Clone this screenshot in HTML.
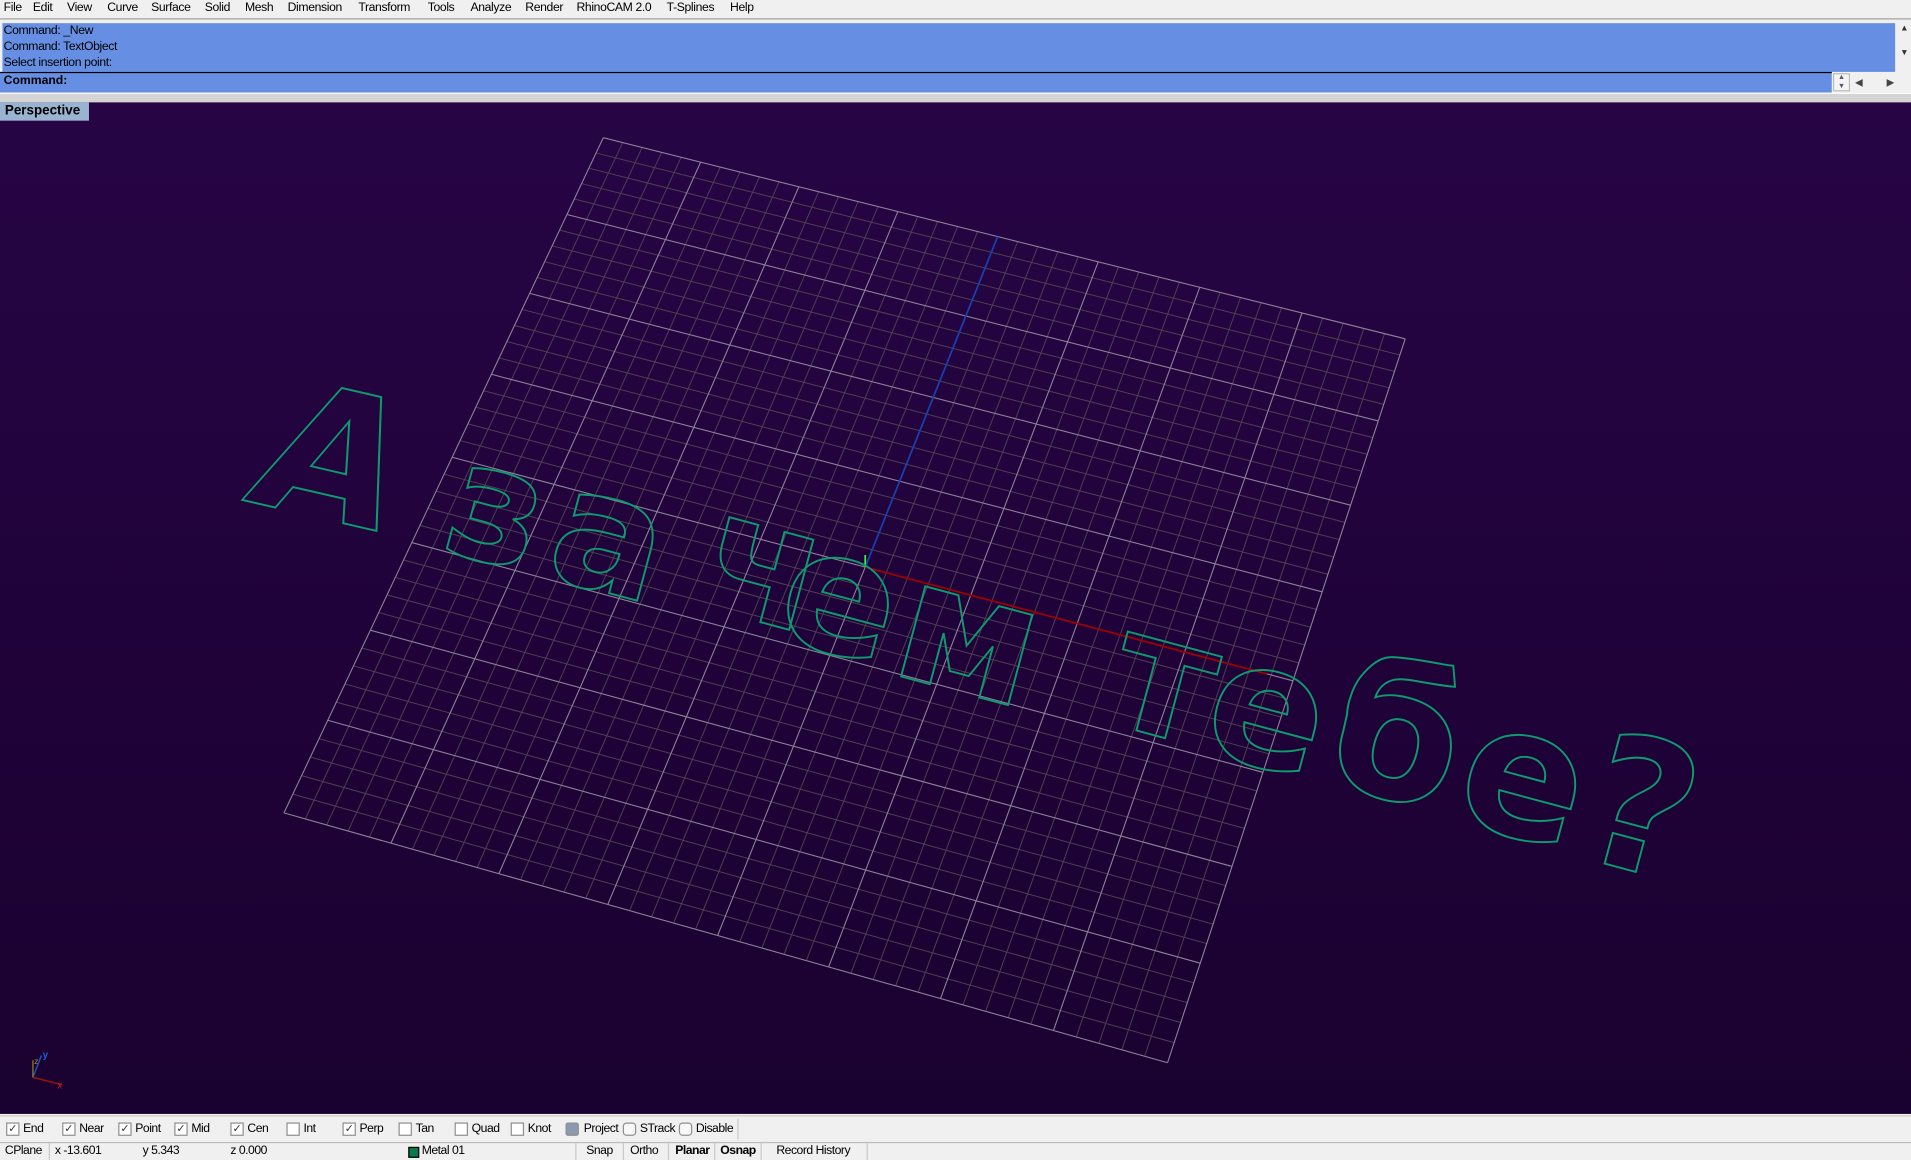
<!DOCTYPE html>
<html><head><meta charset="utf-8">
<style>
html,body{margin:0;padding:0;width:1911px;height:1159px;overflow:hidden;background:#f0f0f0}
#root{position:absolute;left:0;top:0;width:1568px;height:951px;transform:scale(1.21875);transform-origin:0 0;font-family:"Liberation Sans",sans-serif;font-size:10px;color:#000}
.a{position:absolute;white-space:nowrap}
#menu{position:absolute;left:0;top:0;width:1568px;height:15px;background:#f0f0f0;border-bottom:1px solid #a0a0a0}
#menu span{position:absolute;top:1px;letter-spacing:-0.3px}
#hist{position:absolute;left:2px;top:19px;width:1553px;height:40px;background:#668fe4}
#hist div{position:absolute;left:1px;letter-spacing:-0.3px}
#cmd{position:absolute;left:0;top:59px;width:1503px;height:16px;background:#668fe4;border-top:1px solid #000}
#grey{position:absolute;left:0;top:76px;width:1568px;height:8px;background:#d4d4d4;border-top:1px solid #fff;border-bottom:1px solid #999}
#vp{position:absolute;left:0;top:84px;width:1568px;height:830px;background:linear-gradient(#270545,#1f0238 60%,#1a0230)}
#persp{position:absolute;left:0;top:84px;width:73px;height:15px;background:#99b4d1;font-weight:bold;font-size:11px;line-height:15px;padding-left:4px;box-sizing:border-box}
#osnap{position:absolute;left:0;top:915px;width:1568px;height:21px;background:#f0f0f0;border-top:1px solid #ccc}
.cb{position:absolute;top:5px;width:9px;height:9px;border:1px solid #8f8f8f;background:#fff;font-size:9px;line-height:9px;text-align:center;color:#333}
.lb{position:absolute;top:5px;letter-spacing:-0.4px}
#status{position:absolute;left:0;top:937px;width:1568px;height:14px;background:#f0f0f0;border-top:1px solid #bbb}
#status span{position:absolute;top:1px;letter-spacing:-0.4px}
.sep{position:absolute;top:0;width:1px;height:14px;background:#c8c8c8}
</style></head><body>
<div id="root">
<div id="menu">
<span style="left:3px">File</span><span style="left:27px">Edit</span><span style="left:55px">View</span><span style="left:88px">Curve</span><span style="left:124px">Surface</span><span style="left:168px">Solid</span><span style="left:201px">Mesh</span><span style="left:236px">Dimension</span><span style="left:294px">Transform</span><span style="left:351px">Tools</span><span style="left:386px">Analyze</span><span style="left:431px">Render</span><span style="left:473px">RhinoCAM 2.0</span><span style="left:547px">T-Splines</span><span style="left:599px">Help</span>
</div>
<div id="hist">
<div style="top:1px">Command: _New</div>
<div style="top:14px">Command: TextObject</div>
<div style="top:27px">Select insertion point:</div>
</div>
<div class="a" style="left:1557px;top:19px;width:11px;height:40px;background:#f0f0f0;font-size:7px;line-height:10px;text-align:center;color:#333">▲<br><br>▼</div>
<div id="cmd"><span class="a" style="left:3px;top:1px;font-weight:bold">Command:</span></div>
<div class="a" style="left:1504px;top:60px;width:14px;height:15px;background:#f4f4f4;border:1px solid #bbb;box-sizing:border-box;font-size:6px;line-height:7px;text-align:center;color:#557">▲<br>▼</div>
<div class="a" style="left:1518px;top:60px;width:50px;height:15px;background:#f0f0f0;font-size:8px;line-height:15px;color:#444"><span class="a" style="left:4px">◀</span><span class="a" style="left:30px">▶</span></div>
<div id="grey"></div>
<div id="vp"></div>
<svg id="g" class="a" style="left:0;top:0" width="1568" height="951" viewBox="0 0 1568 951"></svg>
<div id="persp">Perspective</div>
<div id="osnap">
<div class="cb" style="left:5px">✓</div><span class="lb" style="left:19px">End</span>
<div class="cb" style="left:51px">✓</div><span class="lb" style="left:65px">Near</span>
<div class="cb" style="left:97px">✓</div><span class="lb" style="left:111px">Point</span>
<div class="cb" style="left:143px">✓</div><span class="lb" style="left:157px">Mid</span>
<div class="cb" style="left:189px">✓</div><span class="lb" style="left:203px">Cen</span>
<div class="cb" style="left:235px"></div><span class="lb" style="left:249px">Int</span>
<div class="cb" style="left:281px">✓</div><span class="lb" style="left:295px">Perp</span>
<div class="cb" style="left:327px"></div><span class="lb" style="left:341px">Tan</span>
<div class="cb" style="left:373px"></div><span class="lb" style="left:387px">Quad</span>
<div class="cb" style="left:419px"></div><span class="lb" style="left:433px">Knot</span>
<div class="cb" style="left:464px;background:#8a9bb0;border-radius:2px"></div><span class="lb" style="left:479px">Project</span>
<div class="cb" style="left:511px;border-radius:3px;background:#f8f8f8"></div><span class="lb" style="left:525px">STrack</span>
<div class="cb" style="left:557px;border-radius:3px;background:#f8f8f8"></div><span class="lb" style="left:571px">Disable</span>
<div class="sep" style="left:605px;top:2px;height:17px"></div>
</div>
<div id="status">
<span style="left:4px">CPlane</span><div class="sep" style="left:40px"></div>
<span style="left:45px">x -13.601</span><span style="left:117px">y 5.343</span><span style="left:189px">z 0.000</span>
<div class="a" style="left:335px;top:3px;width:9px;height:9px;background:#0b7a4a;border:1px solid #000;box-sizing:border-box"></div><span style="left:346px">Metal 01</span>
<div class="sep" style="left:472px"></div><span style="left:481px">Snap</span><div class="sep" style="left:511px"></div>
<span style="left:517px">Ortho</span><div class="sep" style="left:548px"></div>
<span style="left:554px;font-weight:bold">Planar</span><div class="sep" style="left:586px"></div>
<span style="left:591px;font-weight:bold">Osnap</span><div class="sep" style="left:624px"></div>
<span style="left:637px">Record History</span><div class="sep" style="left:711px"></div>
</div>
</div>
<script>
var P=[[495,113],[1153,278],[958,872],[233,667]];
var x0=P[0][0],y0=P[0][1],x1=P[1][0],y1=P[1][1],x2=P[2][0],y2=P[2][1],x3=P[3][0],y3=P[3][1];
var dx1=x1-x2,dx2=x3-x2,dx3=x0-x1+x2-x3,dy1=y1-y2,dy2=y3-y2,dy3=y0-y1+y2-y3;
var den=dx1*dy2-dx2*dy1,g=(dx3*dy2-dx2*dy3)/den,h=(dx1*dy3-dx3*dy1)/den;
var a=x1-x0+g*x1,b=x3-x0+h*x3,c=x0,d=y1-y0+g*y1,e=y3-y0+h*y3,f=y0;
function m(u,v){var w=g*u+h*v+1;return [(a*u+b*v+c)/w,(d*u+e*v+f)/w];}
var s='',mj='',N=40;
for(var i=0;i<=N;i++){var t=i/N;var A=m(t,0),B=m(t,1),C=m(0,t),D=m(1,t);
 var l1='M'+A[0].toFixed(1)+' '+A[1].toFixed(1)+'L'+B[0].toFixed(1)+' '+B[1].toFixed(1);
 var l2='M'+C[0].toFixed(1)+' '+C[1].toFixed(1)+'L'+D[0].toFixed(1)+' '+D[1].toFixed(1);
 if(i%5==0){mj+=l1+l2;}else{s+=l1+l2;}}
var O=m(.5,.5),T=m(.5,0),R=m(.97,.5);
var html='<path d="'+s+'" stroke="#4d4150" stroke-width="0.8" fill="none"/>'+
'<path d="'+mj+'" stroke="#8c8296" stroke-width="0.9" fill="none"/>'+
'<line x1="'+O[0]+'" y1="'+O[1]+'" x2="'+T[0]+'" y2="'+T[1]+'" stroke="#1840b0" stroke-width="1.4"/>'+
'<line x1="'+O[0]+'" y1="'+O[1]+'" x2="'+R[0]+'" y2="'+R[1]+'" stroke="#a00000" stroke-width="1.4"/>'+
'<line x1="'+O[0]+'" y1="'+O[1]+'" x2="'+O[0]+'" y2="'+(O[1]-10)+'" stroke="#30ff30" stroke-width="1.4"/>';
var L=[["А",198,410,148,13,-10],["з",360,450,132,15,0],["а",445,472,135,15,0],["ч",570,496,140,15,0],["е",633,522,138,15,0],["м",728,552,140,15,0],["т",905,592,140,15,0],["е",983,615,140,15,0],["б",1083,640,150,15,0],["е",1190,672,148,15,0],["?",1292,702,150,15,0]];
for(var k=0;k<L.length;k++){var q=L[k];
 html+='<text transform="translate('+q[1]+' '+q[2]+') rotate('+q[4]+') skewX('+q[5]+')" font-family="DejaVu Sans, sans-serif" font-weight="bold" font-size="'+q[3]+'" fill="none" stroke="#0e9a6e" stroke-width="1.6">'+q[0]+'</text>';}
html+='<line x1="27" y1="884" x2="51" y2="890" stroke="#a01010" stroke-width="1.2"/><line x1="27" y1="884" x2="34" y2="866" stroke="#2050c0" stroke-width="1.2"/><line x1="27" y1="884" x2="27" y2="870" stroke="#807020" stroke-width="1.2"/>';
html+='<text x="47" y="893" font-size="8" fill="#c02020" font-family="Liberation Sans">x</text><text x="35" y="868" font-size="8" fill="#2060d0" font-family="Liberation Sans" font-weight="bold">y</text><text x="28" y="873" font-size="7" fill="#a09020" font-family="Liberation Sans">z</text>';
document.getElementById('g').innerHTML=html;
</script>
</body></html>
